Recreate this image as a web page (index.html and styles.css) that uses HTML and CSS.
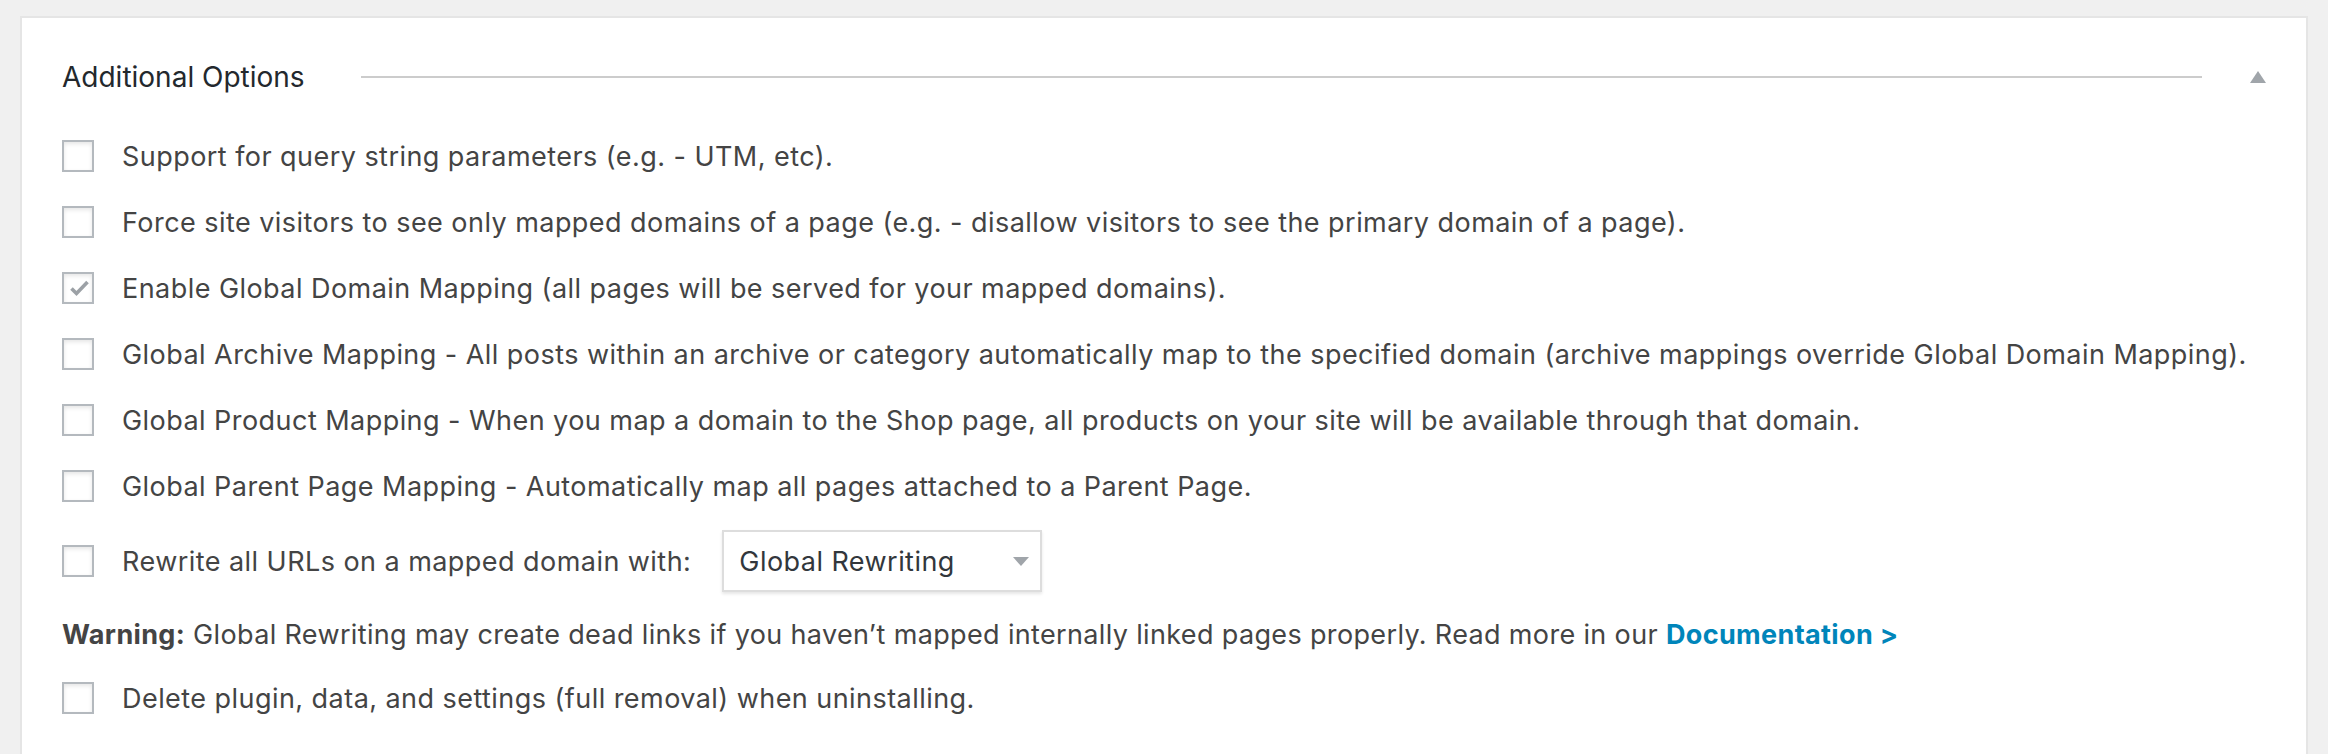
FILE: index.html
```html
<!DOCTYPE html>
<html lang="en">
<head>
    <meta charset="UTF-8">
    <meta name="viewport" content="width=device-width, initial-scale=1.0">
    <title>Additional Options</title>
    <link rel="stylesheet" href="styles.css">
</head>
<body>
    <div class="panel">
        <div class="panel-header">
            <h2>Additional Options</h2>
            <div class="rule"></div>
            <span class="toggle"></span>
        </div>

        <div class="options">
            <div class="option">
                <span class="checkbox"></span>
                <span>Support for query string parameters (e.g. - UTM, etc).</span>
            </div>
            <div class="option">
                <span class="checkbox"></span>
                <span>Force site visitors to see only mapped domains of a page (e.g. - disallow visitors to see the primary domain of a page).</span>
            </div>
            <div class="option">
                <span class="checkbox checked">
                    <svg width="28" height="28" viewBox="0 0 28 28"><path d="M7.5 14.5 L12.5 19.5 L23.5 8" fill="none" stroke="#9ca1a6" stroke-width="3.6"/></svg>
                </span>
                <span>Enable Global Domain Mapping (all pages will be served for your mapped domains).</span>
            </div>
            <div class="option">
                <span class="checkbox"></span>
                <span>Global Archive Mapping - All posts within an archive or category automatically map to the specified domain (archive mappings override Global Domain Mapping).</span>
            </div>
            <div class="option">
                <span class="checkbox"></span>
                <span>Global Product Mapping - When you map a domain to the Shop page, all products on your site will be available through that domain.</span>
            </div>
            <div class="option">
                <span class="checkbox"></span>
                <span>Global Parent Page Mapping - Automatically map all pages attached to a Parent Page.</span>
            </div>
            <div class="option">
                <span class="checkbox"></span>
                <span>Rewrite all URLs on a mapped domain with:</span>
                <div class="select">
                    <span>Global Rewriting</span>
                    <svg width="16" height="9" viewBox="0 0 16 9"><path d="M0 0 H16 L8 9 Z" fill="#a0a5aa"/></svg>
                </div>
            </div>

            <p class="warning"><strong>Warning:</strong> Global Rewriting may create dead links if you haven’t mapped internally linked pages properly. Read more in our <a href="#">Documentation &gt;</a></p>

            <div class="option">
                <span class="checkbox"></span>
                <span>Delete plugin, data, and settings (full removal) when uninstalling.</span>
            </div>
        </div>
    </div>
</body>
</html>
```

FILE: styles.css
```css
* {
    box-sizing: border-box;
    margin: 0;
    padding: 0;
}

body {
    background-color: #f0f0f0;
    color: #444;
    font-family: Inter, 'Noto Sans', sans-serif;
    font-size: 27px;
    letter-spacing: 0.45px;
    padding: 16px 20px 0 20px;
}

.panel {
    background-color: white;
    border: 2px solid #e5e5e5;
    border-bottom: none;
    min-height: 760px;
    padding: 37px 40px 0 40px;
}

.panel-header {
    display: flex;
    align-items: center;
    height: 44px;
    margin-bottom: 35px;
}

.panel-header h2 {
    font-size: 28px;
    font-weight: 400;
    letter-spacing: 0;
    color: #23282d;
    white-space: nowrap;
}

.rule {
    flex: 1;
    height: 2px;
    background-color: #ccc;
    margin: 0 48px 0 56px;
}

.toggle {
    width: 0;
    height: 0;
    border-left: 8px solid transparent;
    border-right: 8px solid transparent;
    border-bottom: 12px solid #a0a5aa;
}

.option {
    display: flex;
    align-items: center;
    min-height: 44px;
    margin-bottom: 22px;
    white-space: nowrap;
}

.checkbox {
    flex: none;
    width: 32px;
    height: 32px;
    border: 2px solid #b4b9be;
    box-shadow: inset 0 2px 4px rgba(0,0,0,0.1);
    background-color: white;
    margin-right: 28px;
    display: flex;
}

.select {
    display: flex;
    align-items: center;
    justify-content: space-between;
    width: 320px;
    height: 62px;
    margin-left: 31px;
    padding: 0 11px 0 15px;
    border: 2px solid #ddd;
    box-shadow: 0 2px 3px rgba(0,0,0,0.1);
    color: #32373c;
}

.warning {
    line-height: 44px;
    letter-spacing: 0.35px;
    margin-top: -1px;
    margin-bottom: 19px;
    white-space: nowrap;
}

.warning strong {
    font-weight: 700;
}

.warning a {
    color: #0085ba;
    font-weight: 700;
    text-decoration: none;
}
```
